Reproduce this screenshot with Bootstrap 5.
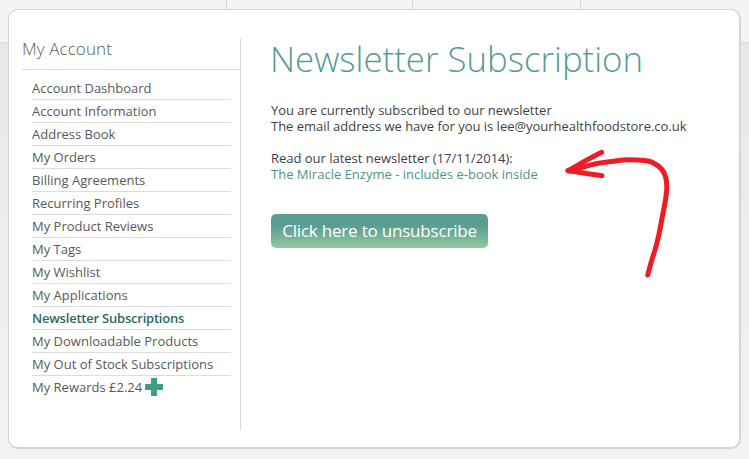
<!DOCTYPE html>
<html lang="en">
<head>
<meta charset="utf-8">
<title>Newsletter Subscription</title>
<link href="https://cdn.jsdelivr.net/npm/bootstrap@5.3.0/dist/css/bootstrap.min.css" rel="stylesheet">
<style>
html,body{height:459px;overflow:hidden}
body{background:linear-gradient(#f4f4f4 0,#f4f4f4 42px,#dcdcdc 42px,#dcdcdc 43px,#e8e8e8 43px,#f3f3f3 459px);font-family:"Open Sans","Noto Sans",sans-serif;font-size:13px;color:#4a4a4a;position:relative}
.topstrip{height:9px;display:flex}
.topstrip span{border-right:1px solid #d5d5d5;display:block}
.tab1{width:227px}.tab2{width:186px}.tab3{width:168px}
.sheet{margin:0 8px;width:733px;height:440px;background:#fff;border:1px solid #d4d4d4;border-bottom-width:2px;border-right-width:2px;border-radius:10px;padding:28px 13px 18px 13px}
.sidecol{width:219px;border-right:1px solid #d9d9d9;height:392px;flex:none}
.sidetitle{font-size:17px;font-weight:300;color:#4f5f68;height:32px;line-height:22px;margin:0;border-bottom:1px solid #dcdcdc;letter-spacing:.1px}
.sidemenu{margin:7px 9px 0 10px}
.sidemenu li{height:23px;line-height:22px;border-bottom:1px solid #dcdcdc;color:#595959;white-space:nowrap}
.sidemenu li:last-child{border-bottom:0}
.sidemenu .current{font-weight:600;color:#2c6a60;letter-spacing:-.22px}
.plus{display:inline-block;vertical-align:-4px;margin-left:3px}
.mainpane{padding-left:30px}
.pagehead{font-size:34.8px;font-weight:300;color:#569c92;line-height:44px;margin:-1px 0 21px -1px;white-space:nowrap}
.mainpane p{line-height:16px;margin:0 0 16px;color:#3f3f3f;letter-spacing:-.02px}
.mainpane a{color:#4d9389;text-decoration:none;letter-spacing:.01px}
.unsub{margin-top:32px;height:34px;width:217px;padding:0;font-size:17px;line-height:32px;color:#fff;border:0;border-radius:5px;background:linear-gradient(#5a9e92 0%,#5a9e92 35%,#8fca9f 100%);font-weight:400;letter-spacing:-.2px}
.scribble{position:absolute;left:0;top:0;pointer-events:none}
</style>
</head>
<body>
<div class="topstrip"><span class="tab1"></span><span class="tab2"></span><span class="tab3"></span></div>
<div class="sheet d-flex">
  <aside class="sidecol">
    <h2 class="sidetitle">My Account</h2>
    <ul class="sidemenu list-unstyled">
      <li>Account Dashboard</li>
      <li>Account Information</li>
      <li>Address Book</li>
      <li>My Orders</li>
      <li>Billing Agreements</li>
      <li>Recurring Profiles</li>
      <li>My Product Reviews</li>
      <li>My Tags</li>
      <li>My Wishlist</li>
      <li>My Applications</li>
      <li class="current">Newsletter Subscriptions</li>
      <li>My Downloadable Products</li>
      <li>My Out of Stock Subscriptions</li>
      <li>My Rewards £2.24<svg class="plus" width="18" height="18" viewBox="0 0 18 18"><path fill="#3f9f86" d="M6 0h6v6h6v6h-6v6H6v-6H0V6h6z"/></svg></li>
    </ul>
  </aside>
  <main class="mainpane flex-grow-1">
    <h1 class="pagehead">Newsletter Subscription</h1>
    <p>You are currently subscribed to our newsletter<br>The email address we have for you is lee@yourhealthfoodstore.co.uk</p>
    <p>Read our latest newsletter (17/11/2014):<br><a href="#">The Miracle Enzyme - includes e-book inside</a></p>
    <button type="button" class="btn unsub d-block">Click here to unsubscribe</button>
  </main>
</div>
<svg class="scribble" width="749" height="459" viewBox="0 0 749 459" fill="none" stroke="#ee1c25" stroke-width="5" stroke-linecap="round" stroke-linejoin="round">
  <path d="M647.7 275C651 262 653 256 655 250C658 240 660 230 661.700 220C664 208 666 200 666.700 190C667 184 666.500 179 665 175C663 170 660 167 656.700 165C653 162 650 161 646.700 160.700C638 160 630 159.500 623 160C615 161 608 162 600 163C594 164 589 165.500 583 167C578 168 573 169.500 568 170.700"/>
  <path d="M601.700 152.300C590 158 578 165 568 170.700C578 172 590 174 602 175.700"/>
</svg>
</body>
</html>
